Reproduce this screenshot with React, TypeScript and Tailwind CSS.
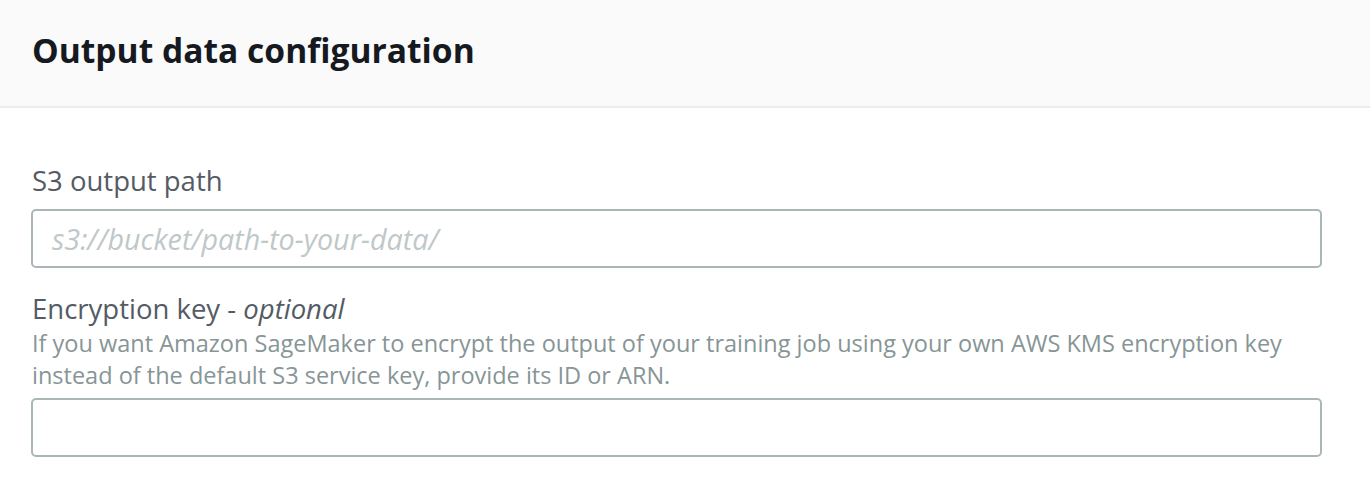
import React from 'react'

const font = { fontFamily: '"Open Sans", "Noto Sans", Arial, sans-serif' }

const OutputDataConfig = () => {
  return (
    <div className="w-[1370px] h-[492px] bg-white" style={font}>
      {/* Header */}
      <div className="h-[108px] bg-[#fafafa] border-b-2 border-[#eaeded] px-8 pt-[27px]">
        <h2 className="text-[33.6px] leading-[46px] font-bold text-[#16191f]">Output data configuration</h2>
      </div>

      {/* Body */}
      <div className="pl-[31px] pr-12 pt-[57px]">
        <label className="block pl-px text-[27.5px] leading-[32px] text-[#545b64] mb-[12px]">S3 output path</label>
        <div className="h-[59px] border-2 border-[#aab7b8] rounded-[5px] flex items-center px-[19px]">
          <span className="text-[28.7px] italic text-[#bfc8c9]">s3://bucket/path-to-your-data/</span>
        </div>

        <label className="block pl-px mt-[25px] text-[27.5px] leading-[32px] text-[#545b64]">
          Encryption key - <i>optional</i>
        </label>
        <p className="pl-px mt-[2px] mb-[7px] text-[23.5px] leading-[32px] text-[#879596]">
          If you want Amazon SageMaker to encrypt the output of your training job using your own AWS KMS encryption key
          <br />
          instead of the default S3 service key, provide its ID or ARN.
        </p>
        <div className="h-[59px] border-2 border-[#aab7b8] rounded-[5px]" />
      </div>
    </div>
  )
}

export default function App() {
  return <OutputDataConfig />
}
